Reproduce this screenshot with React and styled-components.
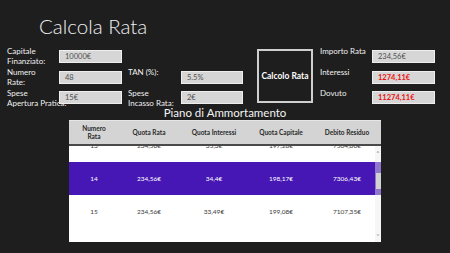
import styled, { createGlobalStyle } from "styled-components";

const GlobalStyle = createGlobalStyle`
  html, body {
    margin: 0;
    padding: 0;
    background: #1e1e1e;
  }
  body {
    font-family: Lato, "Open Sans", sans-serif;
  }
`;

const Page = styled.div`
  width: 450px;
  height: 253px;
  background: #1e1e1e;
  color: #f2f2f2;
  overflow: hidden;
  display: flex;
  flex-direction: column;
`;

const Title = styled.h1`
  margin: 12px 0 0 39px;
  font-size: 20.5px;
  font-weight: 300;
  line-height: 28px;
  color: #f0f0f0;
`;

const Form = styled.div`
  margin: 5px 0 0 7px;
  display: grid;
  grid-template-columns: 52px 63px 6px 53px 62px 14px 56px 7px 52px 63px;
  grid-template-rows: 21px 21px 21px;
`;

const Label = styled.div`
  grid-column: ${(p) => p.$col};
  grid-row: ${(p) => p.$row};
  font-size: 8px;
  line-height: 10px;
  padding-top: 1px;
  color: #f0f0f0;
  white-space: nowrap;
`;

const Field = styled.div`
  grid-column: ${(p) => p.$col};
  grid-row: ${(p) => p.$row};
  align-self: start;
  margin-top: ${(p) => (p.$row === 3 ? "4px" : "5px")};
  height: 13px;
  box-sizing: border-box;
  background: #d6d6d6;
  border: 1px solid #eeeeee;
  padding: 0 5px;
  font-size: 7.5px;
  line-height: 11px;
  color: ${(p) => (p.$alert ? "#ee1111" : "#505050")};
  font-weight: ${(p) => (p.$alert ? 700 : 400)};
`;

const CalcButton = styled.button`
  grid-column: 7;
  grid-row: 1 / span 3;
  margin: 4px 0 5px;
  background: transparent;
  border: 2px solid #cfcfcf;
  color: #ffffff;
  font-family: inherit;
  font-size: 8.5px;
  font-weight: 700;
  white-space: nowrap;
  padding: 0;
`;

const SectionTitle = styled.h2`
  margin: 0;
  margin-top: -2px;
  text-align: center;
  font-size: 11.5px;
  font-weight: 400;
  line-height: 14px;
  color: #f4f4f4;
`;

const Table = styled.div`
  margin: 0 0 0 69px;
  width: 312px;
  display: flex;
  flex-direction: column;
`;

const cols = "50px 60px 70px 64px 1fr";

const Header = styled.div`
  display: grid;
  grid-template-columns: ${cols};
  height: 26px;
  box-sizing: border-box;
  background: #d4d4d4;
  border-top: 1px solid #e6e6e6;
  border-bottom: 2px solid #4a4a4a;
  align-items: center;
`;

const HeadCell = styled.div`
  text-align: center;
  font-size: 6.5px;
  font-weight: 700;
  line-height: 8px;
  color: #2a2a2a;
`;

const Body = styled.div`
  position: relative;
  height: 96px;
  overflow: hidden;
  background: #ffffff;
`;

const Rows = styled.div`
  margin-top: -17px;
`;

const Row = styled.div`
  display: grid;
  grid-template-columns: ${cols};
  height: 33px;
  align-items: center;
  background: ${(p) => (p.$selected ? "#4617b4" : "#ffffff")};
  color: ${(p) => (p.$selected ? "#ffffff" : "#3a3a3a")};
`;

const Cell = styled.div`
  text-align: center;
  font-size: 6.5px;
`;

const Scrollbar = styled.div`
  position: absolute;
  top: 0;
  right: 0;
  bottom: 0;
  width: 6px;
  background: rgba(236, 236, 236, 0.45);
  display: flex;
  flex-direction: column;
  align-items: center;
  justify-content: space-between;
  padding: 4px 0 3px;
  box-sizing: border-box;
`;

const Arrow = styled.div`
  font-size: 6px;
  line-height: 6px;
  color: #7a7a7a;
`;

const Thumb = styled.div`
  position: absolute;
  top: 27px;
  left: 1px;
  width: 5px;
  height: 16px;
  background: #d2d2d2;
`;

const rows = [
  ["13", "234,56€", "35,3€", "197,26€", "7504,60€"],
  ["14", "234,56€", "34,4€", "198,17€", "7306,43€"],
  ["15", "234,56€", "33,49€", "199,08€", "7107,35€"],
  ["16", "234,56€", "32,58€", "199,99€", "6907,36€"],
];

export default function App() {
  return (
    <>
      <GlobalStyle />
      <Page>
        <Title>Calcola Rata</Title>
        <Form>
          <Label $col={1} $row={1}>
            Capitale
            <br />
            Finanziato:
          </Label>
          <Field $col={2} $row={1}>10000€</Field>
          <Label $col={1} $row={2}>
            Numero
            <br />
            Rate:
          </Label>
          <Field $col={2} $row={2}>48</Field>
          <Label $col={1} $row={3}>
            Spese
            <br />
            Apertura Pratica:
          </Label>
          <Field $col={2} $row={3}>15€</Field>

          <Label $col={4} $row={2}>TAN (%):</Label>
          <Field $col={5} $row={2}>5.5%</Field>
          <Label $col={4} $row={3}>
            Spese
            <br />
            Incasso Rata:
          </Label>
          <Field $col={5} $row={3}>2€</Field>

          <CalcButton>Calcolo Rata</CalcButton>

          <Label $col={9} $row={1}>Importo Rata</Label>
          <Field $col={10} $row={1}>234,56€</Field>
          <Label $col={9} $row={2}>Interessi</Label>
          <Field $col={10} $row={2} $alert>
            1274,11€
          </Field>
          <Label $col={9} $row={3}>Dovuto</Label>
          <Field $col={10} $row={3} $alert>
            11274,11€
          </Field>
        </Form>

        <SectionTitle>Piano di Ammortamento</SectionTitle>
        <Table>
          <Header>
            <HeadCell>
              Numero
              <br />
              Rata
            </HeadCell>
            <HeadCell>Quota Rata</HeadCell>
            <HeadCell>Quota Interessi</HeadCell>
            <HeadCell>Quota Capitale</HeadCell>
            <HeadCell>Debito Residuo</HeadCell>
          </Header>
          <Body>
            <Rows>
              {rows.map((r) => (
                <Row key={r[0]} $selected={r[0] === "14"}>
                  {r.map((c, i) => (
                    <Cell key={i}>{c}</Cell>
                  ))}
                </Row>
              ))}
            </Rows>
            <Scrollbar>
              <Arrow>˄</Arrow>
              <Thumb />
              <Arrow>˅</Arrow>
            </Scrollbar>
          </Body>
        </Table>
      </Page>
    </>
  );
}
